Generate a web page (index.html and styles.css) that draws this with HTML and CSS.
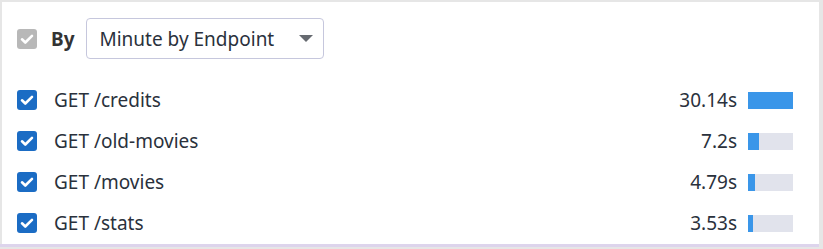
FILE: index.html
```html
<!DOCTYPE html>
<html lang="en">
<head>
    <meta charset="UTF-8">
    <meta name="viewport" content="width=device-width, initial-scale=1.0">
    <title>Endpoints</title>
    <link rel="stylesheet" href="styles.css">
</head>
<body>
    <div class="panel">
        <div class="header">
            <span class="check disabled">
                <svg viewBox="0 0 20 20" width="20" height="20"><path d="M5 10.3l3.3 3.2L15 6.8" fill="none" stroke="#fff" stroke-width="2.6" stroke-linecap="round" stroke-linejoin="round"/></svg>
            </span>
            <span class="byLabel">By</span>
            <div class="select">
                <span>Minute by Endpoint</span>
                <span class="caret"></span>
            </div>
        </div>

        <div class="list">
            <div class="row">
                <span class="check">
                    <svg viewBox="0 0 20 20" width="20" height="20"><path d="M5 10.3l3.3 3.2L15 6.8" fill="none" stroke="#fff" stroke-width="2.6" stroke-linecap="round" stroke-linejoin="round"/></svg>
                </span>
                <span class="name">GET /credits</span>
                <span class="value">30.14s</span>
                <span class="bar"><span class="fill" style="width: 100%"></span></span>
            </div>
            <div class="row">
                <span class="check">
                    <svg viewBox="0 0 20 20" width="20" height="20"><path d="M5 10.3l3.3 3.2L15 6.8" fill="none" stroke="#fff" stroke-width="2.6" stroke-linecap="round" stroke-linejoin="round"/></svg>
                </span>
                <span class="name">GET /old-movies</span>
                <span class="value">7.2s</span>
                <span class="bar"><span class="fill" style="width: 24%"></span></span>
            </div>
            <div class="row">
                <span class="check">
                    <svg viewBox="0 0 20 20" width="20" height="20"><path d="M5 10.3l3.3 3.2L15 6.8" fill="none" stroke="#fff" stroke-width="2.6" stroke-linecap="round" stroke-linejoin="round"/></svg>
                </span>
                <span class="name">GET /movies</span>
                <span class="value">4.79s</span>
                <span class="bar"><span class="fill" style="width: 16%"></span></span>
            </div>
            <div class="row">
                <span class="check">
                    <svg viewBox="0 0 20 20" width="20" height="20"><path d="M5 10.3l3.3 3.2L15 6.8" fill="none" stroke="#fff" stroke-width="2.6" stroke-linecap="round" stroke-linejoin="round"/></svg>
                </span>
                <span class="name">GET /stats</span>
                <span class="value">3.53s</span>
                <span class="bar"><span class="fill" style="width: 12%"></span></span>
            </div>
        </div>
    </div>
    <div class="footer"></div>
</body>
</html>
```

FILE: styles.css
```css
body {
    margin: 0;
    font-family: "Noto Sans", "Open Sans", sans-serif;
    background-color: #e6e6e6;
    color: #2a313c;
    height: 249px;
    overflow: hidden;
}

.panel {
    background-color: #fff;
    margin: 2px 4px 0 2px;
    height: 242px;
    padding: 0 0 0 15px;
    box-sizing: border-box;
}

.header {
    display: flex;
    align-items: center;
    height: 57px;
    padding-top: 16px;
    box-sizing: border-box;
}

.check {
    width: 20px;
    height: 20px;
    border-radius: 3px;
    background-color: #1b6cc4;
    display: flex;
    flex-shrink: 0;
}

.check.disabled {
    background-color: #b8b8b8;
}

.byLabel {
    font-weight: bold;
    font-size: 19px;
    margin-left: 14px;
    color: #333;
}

.select {
    margin-left: 12px;
    width: 238px;
    height: 41px;
    box-sizing: border-box;
    border: 1px solid #c6c7dd;
    border-radius: 4px;
    display: flex;
    align-items: center;
    justify-content: space-between;
    padding: 0 10px 0 12px;
    font-size: 19px;
}

.caret {
    width: 0;
    height: 0;
    border-left: 7px solid transparent;
    border-right: 7px solid transparent;
    border-top: 7px solid #666a70;
}

.list {
    display: flex;
    flex-direction: column;
    gap: 21px;
    padding-top: 31px;
}

.row {
    display: flex;
    align-items: center;
    height: 20px;
    font-size: 19px;
}

.name {
    margin-left: 17px;
    flex: 1;
}

.value {
    text-align: right;
    margin-right: 11px;
}

.bar {
    width: 45px;
    height: 17px;
    background-color: #e1e3ec;
    display: flex;
    margin-right: 26px;
}

.fill {
    background-color: #3a96e9;
    height: 100%;
}

.footer {
    height: 3px;
    background-color: #ddd4ec;
    margin-right: 4px;
}
```
